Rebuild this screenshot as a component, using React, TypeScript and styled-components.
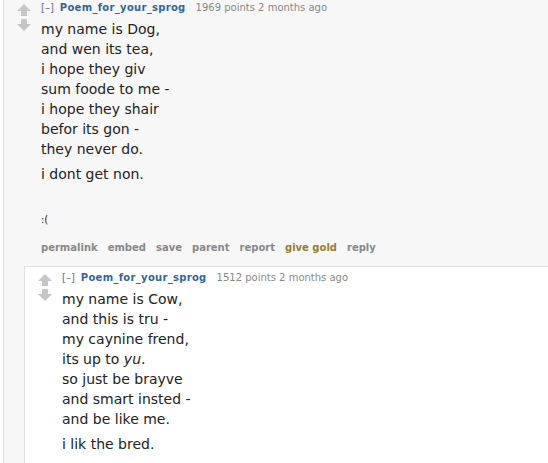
import React from "react";
import styled, { createGlobalStyle } from "styled-components";

const GlobalStyle = createGlobalStyle`
    html, body {
        margin: 0;
        padding: 0;
        background: #ffffff;
        overflow: hidden;
    }
    body {
        font-family: "DejaVu Sans", Verdana, sans-serif;
    }
`;

type Poem = string[][];

interface CommentData {
    author: string;
    points: number;
    age: string;
    poem: Poem;
    smiley?: string;
    child?: CommentData;
}

const cowPoem: Poem = [
    ["my name is Cow,", "and this is tru -", "my caynine frend,", "its up to |yu|.", "so just be brayve", "and smart insted -", "and be like me."],
    ["i lik the bred."],
    ["so all i ask is that you share your foode with the dogs"],
];

const dogPoem: Poem = [
    ["my name is Dog,", "and wen its tea,", "i hope they giv", "sum foode to me -", "i hope they shair", "befor its gon -", "they never do."],
    ["i dont get non."],
];

const thread: CommentData = {
    author: "Poem_for_your_sprog",
    points: 1969,
    age: "2 months ago",
    poem: dogPoem,
    smiley: ":(",
    child: {
        author: "Poem_for_your_sprog",
        points: 1512,
        age: "2 months ago",
        poem: cowPoem,
    },
};

const actions = ["permalink", "embed", "save", "parent", "report", "give gold", "reply"];

function Arrow({ down }: { down?: boolean }) {
    return (
        <ArrowSvg width="14" height="12" viewBox="0 0 14 12" $down={down}>
            <path d="M7 0 L14 7 L10 7 L10 12 L4 12 L4 7 L0 7 Z" fill="#c6c6c6" />
        </ArrowSvg>
    );
}

function renderLine(line: string) {
    // words between pipes are italic
    const parts = line.split("|");
    return parts.map((part, i) => (i % 2 === 1 ? <em key={i}>{part}</em> : <React.Fragment key={i}>{part}</React.Fragment>));
}

function Comment({ data, nested }: { data: CommentData; nested?: boolean }) {
    return (
        <CommentBox $nested={nested}>
            <Entry>
                <Midcol>
                    <Arrow />
                    <Arrow down />
                </Midcol>
                <Content>
                    <Tagline>
                        <Expand>[–]</Expand>
                        <Author>{data.author}</Author>
                        <Score>{data.points} points {data.age}</Score>
                    </Tagline>
                    <Body>
                        {data.poem.map((para, i) => (
                            <Para key={i}>
                                {para.map((line, j) => (
                                    <React.Fragment key={j}>
                                        {renderLine(line)}
                                        {j < para.length - 1 && <br />}
                                    </React.Fragment>
                                ))}
                            </Para>
                        ))}
                        {data.smiley && <Smiley>{data.smiley}</Smiley>}
                    </Body>
                    {!data.child && nested ? null : (
                        <Buttons>
                            {actions.map(a => (
                                <ActionLink key={a} $gold={a === "give gold"}>{a}</ActionLink>
                            ))}
                        </Buttons>
                    )}
                </Content>
            </Entry>
            {data.child && (
                <Children>
                    <Comment data={data.child} nested />
                </Children>
            )}
        </CommentBox>
    );
}

export default function App() {
    return (
        <>
            <GlobalStyle />
            <Page>
                <Comment data={thread} />
            </Page>
        </>
    );
}

const Page = styled.div`
    padding-left: 3px;
    height: 463px;
    overflow: hidden;
`;

const CommentBox = styled.div<{ $nested?: boolean }>`
    background: ${p => (p.$nested ? "#ffffff" : "#f7f7f8")};
    border-left: 1px solid #e2e2e2;
    border-top: ${p => (p.$nested ? "1px solid #e2e2e2" : "none")};
    padding-top: ${p => (p.$nested ? "3px" : "0")};
`;

const Entry = styled.div`
    display: flex;
    align-items: flex-start;
`;

const Midcol = styled.div`
    display: flex;
    flex-direction: column;
    gap: 3px;
    width: 14px;
    margin: 4px 10px 0 13px;
    flex-shrink: 0;
`;

const ArrowSvg = styled.svg<{ $down?: boolean }>`
    display: block;
    transform: ${p => (p.$down ? "rotate(180deg)" : "none")};
`;

const Content = styled.div`
    flex: 1;
    min-width: 0;
`;

const Tagline = styled.div`
    font-size: 10px;
    line-height: 16px;
    color: #888888;
    white-space: nowrap;
`;

const Expand = styled.span`
    color: #6a6a9c;
    margin-right: 6px;
`;

const Author = styled.span`
    color: #336699;
    font-weight: bold;
    letter-spacing: 0.3px;
    margin-right: 10px;
`;

const Score = styled.span`
    color: #888888;
`;

const Body = styled.div`
    margin-top: 3px;
    color: #222222;
    font-size: 14px;
    line-height: 20px;
`;

const Para = styled.p`
    margin: 0 0 5px;
    white-space: nowrap;
`;

const Smiley = styled.p`
    margin: 26px 0 0;
    font-size: 10px;
    line-height: 20px;
`;

const Buttons = styled.div`
    display: flex;
    gap: 10px;
    margin-top: 10px;
    padding-bottom: 10px;
    font-size: 10px;
    line-height: 16px;
`;

const ActionLink = styled.span<{ $gold?: boolean }>`
    font-weight: bold;
    color: ${p => (p.$gold ? "#9a7d2e" : "#888888")};
`;

const Children = styled.div`
    margin-left: 20px;
`;
